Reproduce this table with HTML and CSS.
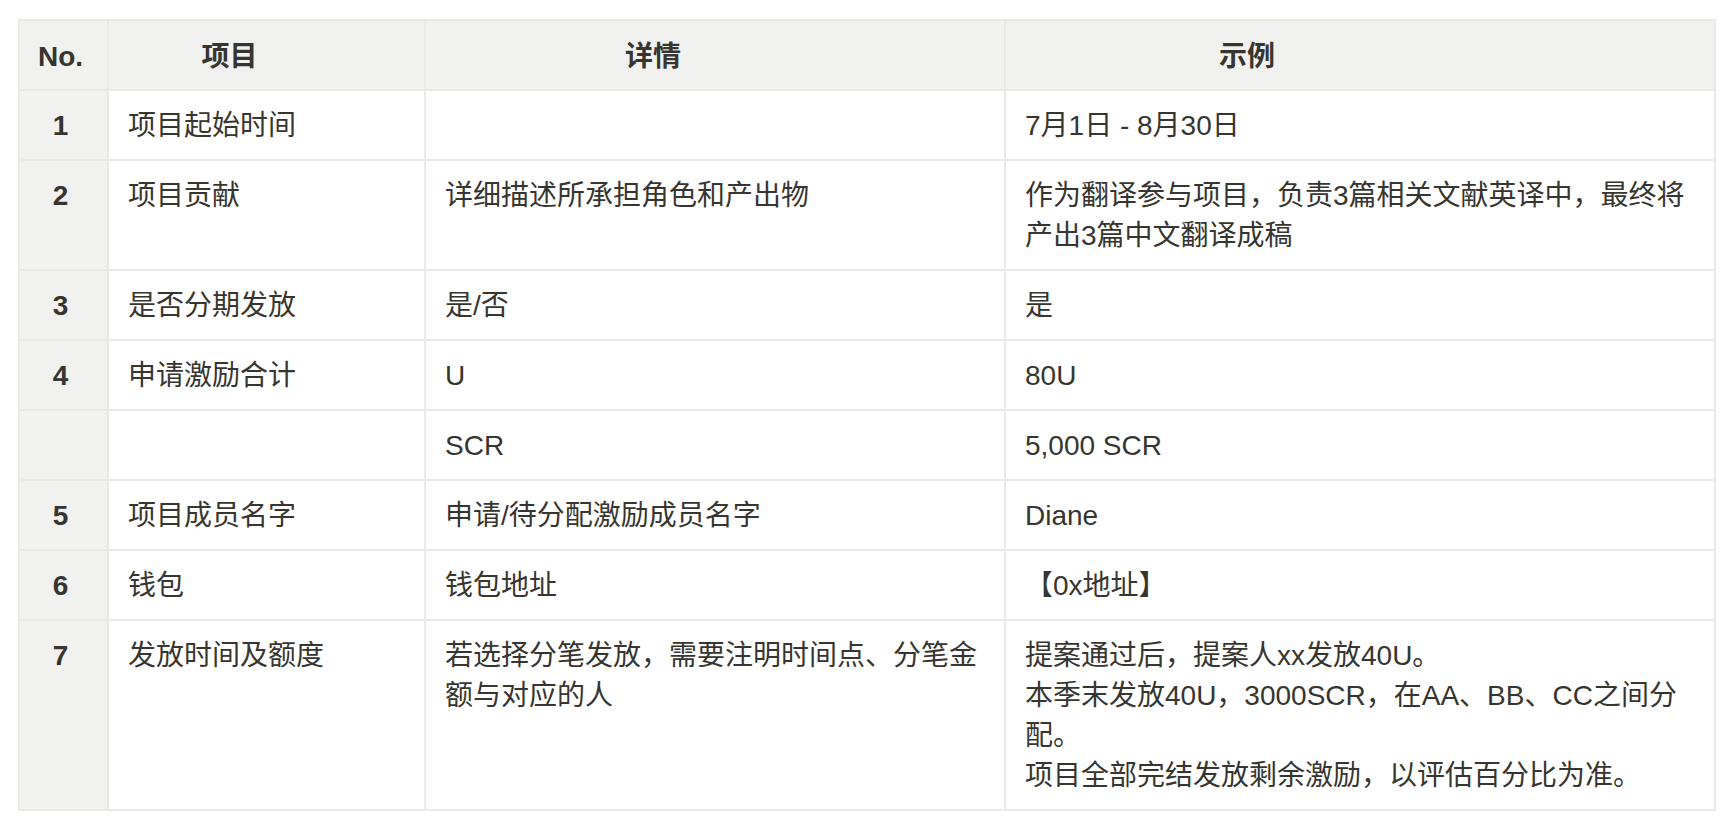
FILE: index.html
```html
<!DOCTYPE html>
<html lang="zh-CN">
<head>
<meta charset="utf-8">
<title>项目激励申请</title>
<link rel="stylesheet" href="styles.css">
</head>
<body>
<div class="page">
  <table class="grid">
    <colgroup>
      <col class="c-no">
      <col class="c-item">
      <col class="c-detail">
      <col class="c-example">
    </colgroup>
    <thead>
      <tr>
        <th class="h-no">No.</th>
        <th class="h-item">项目</th>
        <th class="h-detail">详情</th>
        <th class="h-example">示例</th>
      </tr>
    </thead>
    <tbody>
      <tr>
        <td class="no">1</td>
        <td>项目起始时间</td>
        <td></td>
        <td>7月1日 - 8月30日</td>
      </tr>
      <tr>
        <td class="no">2</td>
        <td>项目贡献</td>
        <td>详细描述所承担角色和产出物</td>
        <td>作为翻译参与项目，负责3篇相关文献英译中，最终将产出3篇中文翻译成稿</td>
      </tr>
      <tr>
        <td class="no">3</td>
        <td>是否分期发放</td>
        <td>是/否</td>
        <td>是</td>
      </tr>
      <tr>
        <td class="no">4</td>
        <td>申请激励合计</td>
        <td>U</td>
        <td>80U</td>
      </tr>
      <tr>
        <td class="no"></td>
        <td></td>
        <td>SCR</td>
        <td>5,000 SCR</td>
      </tr>
      <tr>
        <td class="no">5</td>
        <td>项目成员名字</td>
        <td>申请/待分配激励成员名字</td>
        <td>Diane</td>
      </tr>
      <tr>
        <td class="no">6</td>
        <td>钱包</td>
        <td>钱包地址</td>
        <td>【0x地址】</td>
      </tr>
      <tr>
        <td class="no">7</td>
        <td>发放时间及额度</td>
        <td>若选择分笔发放，需要注明时间点、分笔金额与对应的人</td>
        <td>提案通过后，提案人xx发放40U。<br>本季末发放40U，3000SCR，在AA、BB、CC之间分配。<br>项目全部完结发放剩余激励，以评估百分比为准。</td>
      </tr>
    </tbody>
  </table>
</div>
</body>
</html>
```

FILE: styles.css
```css
html, body {
  margin: 0;
  padding: 0;
  background: #ffffff;
}

body {
  font-family: "Liberation Sans", "Noto Sans CJK SC", sans-serif;
  color: #37352f;
  font-size: 28px;
  line-height: 40px;
}

.page {
  padding: 19px 0 0 18px;
}

.grid {
  border-collapse: separate;
  border-spacing: 0;
  table-layout: fixed;
  width: 1698px;
  border-top: 2px solid #e9e9e7;
  border-left: 2px solid #e9e9e7;
}

.c-no { width: 89px; }
.c-item { width: 317px; }
.c-detail { width: 580px; }
.c-example { width: 710px; }

.grid th,
.grid td {
  border-right: 2px solid #e9e9e7;
  border-bottom: 2px solid #e9e9e7;
  padding: 14px 19px;
  vertical-align: top;
  text-align: left;
  font-weight: 400;
  word-break: break-all;
}

.grid td {
  padding-top: 15px;
  padding-bottom: 13px;
}

.grid th {
  background: #f1f1ef;
  font-weight: 700;
  text-align: center;
  padding-top: 16px;
  padding-bottom: 12px;
}

.grid th.h-no {
  padding-left: 2px;
  padding-right: 8px;
}

.grid th.h-item {
  padding-left: 0;
  padding-right: 74px;
}

.grid th.h-detail {
  padding-left: 0;
  padding-right: 124px;
}

.grid th.h-example {
  padding-left: 0;
  padding-right: 226px;
}

.grid td.no {
  background: #f1f1ef;
  font-weight: 700;
  text-align: center;
  padding-left: 2px;
  padding-right: 8px;
}
```
